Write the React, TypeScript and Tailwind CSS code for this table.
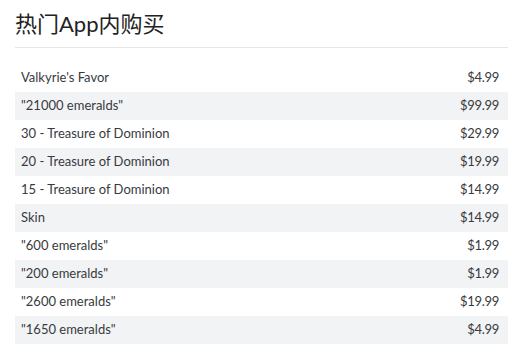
const items = [
  { name: "Valkyrie's Favor", price: "$4.99" },
  { name: '"21000 emeralds"', price: "$99.99" },
  { name: "30 - Treasure of Dominion", price: "$29.99" },
  { name: "20 - Treasure of Dominion", price: "$19.99" },
  { name: "15 - Treasure of Dominion", price: "$14.99" },
  { name: "Skin", price: "$14.99" },
  { name: '"600 emeralds"', price: "$1.99" },
  { name: '"200 emeralds"', price: "$1.99" },
  { name: '"2600 emeralds"', price: "$19.99" },
  { name: '"1650 emeralds"', price: "$4.99" },
];

const App = () => {
  return (
    <div className="w-[525px] h-[354px] bg-white px-[15px] pr-[17px] font-['Lato','Noto_Sans_CJK_SC',sans-serif] text-[#383a40]">
      <h2 className="pt-[10px] pb-[9px] text-[22px] leading-[28px] text-[#222] border-b border-[#e5e7eb]">
        热门App内购买
      </h2>
      <ul className="mt-[16px]">
        {items.map((item, i) => (
          <li
            key={i}
            className={`flex justify-between items-center h-[28px] pl-[6px] pr-[9px] text-[13px] ${i % 2 === 1 ? 'bg-[#f2f3f5]' : 'bg-white'}`}
          >
            <span>{item.name}</span>
            <span className="tracking-[-0.3px]">{item.price}</span>
          </li>
        ))}
      </ul>
    </div>
  );
};

export default App;
